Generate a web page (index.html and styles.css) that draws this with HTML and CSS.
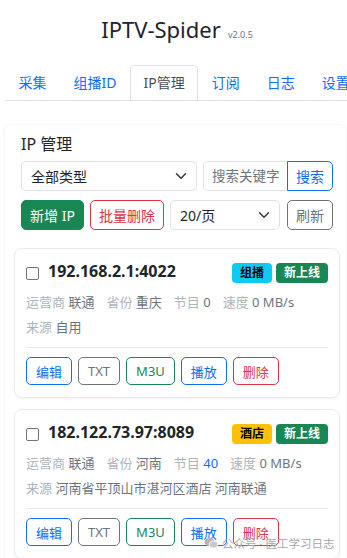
FILE: index.html
```html
<!DOCTYPE html>
<html lang="zh-CN">
<head>
  <meta charset="UTF-8">
  <title>IPTV-Spider</title>
  <meta name="viewport" content="width=device-width, initial-scale=1.0">
  <link rel="stylesheet" href="styles.css">
</head>
<body>

  <!-- Header -->
  <div class="header">
    <span class="title">IPTV-Spider</span>
    <span class="version">v2.0.5</span>
  </div>

  <!-- Tabs -->
  <div class="tabs">
    <a class="tab">采集</a>
    <a class="tab">组播ID</a>
    <a class="tab active">IP管理</a>
    <a class="tab">订阅</a>
    <a class="tab">日志</a>
    <a class="tab">设置</a>
  </div>

  <!-- IP 管理 -->
  <div class="panel">
    <h2 class="panel-title">IP 管理</h2>

    <div class="toolbar">
      <div class="select type-select">
        <span>全部类型</span>
        <svg width="12" height="12" viewBox="0 0 16 16"><path d="M2 5l6 6 6-6" fill="none" stroke="#343a40" stroke-width="2" stroke-linecap="round" stroke-linejoin="round"/></svg>
      </div>
      <div class="search-group">
        <div class="search-input">搜索关键字</div>
        <button class="btn btn-outline-primary search-btn">搜索</button>
      </div>
    </div>

    <div class="toolbar">
      <button class="btn btn-success add-btn">新增 IP</button>
      <button class="btn btn-outline-danger batch-btn">批量删除</button>
      <div class="select page-select">
        <span>20/页</span>
        <svg width="12" height="12" viewBox="0 0 16 16"><path d="M2 5l6 6 6-6" fill="none" stroke="#343a40" stroke-width="2" stroke-linecap="round" stroke-linejoin="round"/></svg>
      </div>
      <button class="btn btn-outline-secondary refresh-btn">刷新</button>
    </div>

    <div class="ip-list">
      <div class="ip-card">
        <div class="ip-head">
          <span class="check"></span>
          <span class="ip">192.168.2.1:4022</span>
          <span class="badges">
            <span class="badge badge-info">组播</span>
            <span class="badge badge-success">新上线</span>
          </span>
        </div>
        <div class="info info-first">
          <span><span class="label">运营商</span> 联通</span>
          <span><span class="label">省份</span> 重庆</span>
          <span><span class="label">节目</span> 0</span>
          <span><span class="label">速度</span> 0 MB/s</span>
        </div>
        <div class="info">
          <span><span class="label">来源</span> 自用</span>
        </div>
        <div class="actions">
          <button class="btn btn-sm btn-outline-primary">编辑</button>
          <button class="btn btn-sm btn-outline-secondary">TXT</button>
          <button class="btn btn-sm btn-outline-success">M3U</button>
          <button class="btn btn-sm btn-outline-primary">播放</button>
          <button class="btn btn-sm btn-outline-danger">删除</button>
        </div>
      </div>

      <div class="ip-card">
        <div class="ip-head">
          <span class="check"></span>
          <span class="ip">182.122.73.97:8089</span>
          <span class="badges">
            <span class="badge badge-warning">酒店</span>
            <span class="badge badge-success">新上线</span>
          </span>
        </div>
        <div class="info info-first">
          <span><span class="label">运营商</span> 联通</span>
          <span><span class="label">省份</span> 河南</span>
          <span><span class="label">节目</span> <span class="count">40</span></span>
          <span><span class="label">速度</span> 0 MB/s</span>
        </div>
        <div class="info">
          <span><span class="label">来源</span> 河南省平顶山市湛河区酒店 河南联通</span>
        </div>
        <div class="actions">
          <button class="btn btn-sm btn-outline-primary">编辑</button>
          <button class="btn btn-sm btn-outline-secondary">TXT</button>
          <button class="btn btn-sm btn-outline-success">M3U</button>
          <button class="btn btn-sm btn-outline-primary">播放</button>
          <button class="btn btn-sm btn-outline-danger">删除</button>
        </div>
      </div>
    </div>
  </div>

  <!-- watermark -->
  <div class="watermark">
    <svg width="14" height="12" viewBox="0 0 28 24"><ellipse cx="11" cy="10" rx="10" ry="8.5" fill="#b5b5b5"/><ellipse cx="19" cy="15" rx="8.5" ry="7" fill="#c8c8c8" stroke="#fff" stroke-width="1.5"/></svg>
    <span>公众号 · 医工学习日志</span>
  </div>

</body>
</html>
```

FILE: styles.css
```css
body {
  margin: 0;
  padding: 0;
  width: 347px;
  height: 558px;
  overflow: hidden;
  background-color: #fff;
  font-family: "Noto Sans", "Noto Sans CJK SC", sans-serif;
  color: #212529;
  position: relative;
}

.header {
  height: 65px;
  box-sizing: border-box;
  padding: 14px 0 0 7px;
  text-align: center;
  white-space: nowrap;
}

.title {
  font-size: 22px;
  line-height: 30px;
}

.version {
  font-size: 9px;
  color: #6c757d;
  margin-left: 3px;
}

.tabs {
  display: flex;
  margin-left: 5px;
  width: 342px;
  overflow: hidden;
  border-bottom: 1px solid #dee2e6;
  white-space: nowrap;
}

.tab {
  flex-shrink: 0;
  padding: 7px 12.5px;
  font-size: 14px;
  line-height: 20px;
  color: #0d6efd;
  border: 1px solid transparent;
  border-top-left-radius: 5px;
  border-top-right-radius: 5px;
  margin-bottom: -1px;
}

.tab.active {
  color: #495057;
  background-color: #fff;
  border-color: #dee2e6 #dee2e6 #fff;
}

.panel {
  margin: 24px 0 0 5px;
  width: 341px;
  padding-top: 8px;
  background-color: #fff;
  border-radius: 6px;
  box-shadow: 0 0 3px rgba(0,0,0,0.08);
  min-height: 500px;
}

.panel-title {
  margin: 0 0 6px 16px;
  font-size: 16px;
  font-weight: normal;
  line-height: 22px;
}

.toolbar {
  display: flex;
  gap: 6px;
  margin: 0 13px 9px 16px;
  height: 30px;
}

.select {
  display: flex;
  align-items: center;
  justify-content: space-between;
  box-sizing: border-box;
  border: 1px solid #dee2e6;
  border-radius: 5px;
  padding: 0 9px 0 9px;
  font-size: 14px;
}

.type-select {
  width: 176px;
}

.page-select {
  width: 110px;
  margin-right: 1px;
}

.search-group {
  display: flex;
  width: 130px;
}

.search-input {
  box-sizing: border-box;
  width: 84px;
  border: 1px solid #dee2e6;
  border-right: none;
  border-radius: 5px 0 0 5px;
  font-size: 13.5px;
  color: #6c757d;
  line-height: 28px;
  padding-left: 8px;
  white-space: nowrap;
  overflow: hidden;
}

.btn {
  box-sizing: border-box;
  font-family: inherit;
  font-size: 13px;
  background-color: #fff;
  border: 1px solid;
  border-radius: 5px;
  padding: 0 6px;
  cursor: pointer;
  white-space: nowrap;
}

.toolbar .btn {
  font-size: 14px;
  padding: 0 4px;
}

.search-btn {
  width: 46px;
  border-radius: 0 5px 5px 0;
}

.add-btn {
  width: 63px;
}

.batch-btn {
  width: 74px;
}

.refresh-btn {
  width: 46px;
}

.btn-success {
  background-color: #198754;
  border-color: #198754;
  color: #fff;
}

.btn-outline-primary {
  color: #0d6efd;
  border-color: #0d6efd;
}

.btn-outline-secondary {
  color: #6c757d;
  border-color: #6c757d;
}

.btn-outline-success {
  color: #198754;
  border-color: #198754;
}

.btn-outline-danger {
  color: #dc3545;
  border-color: #dc3545;
}

.ip-list {
  margin: 18px 6px 0 9px;
}

.ip-card {
  border: 1px solid #e9ecef;
  border-radius: 8px;
  box-shadow: 0 1px 3px rgba(0,0,0,0.06);
  padding: 13px 11px 12px 11px;
  margin-bottom: 11px;
}

.ip-head {
  display: flex;
  align-items: center;
  height: 22px;
}

.check {
  width: 11px;
  height: 11px;
  border: 1px solid #6c757d;
  border-radius: 2px;
  margin-right: 9px;
}

.ip {
  font-size: 16px;
  font-weight: bold;
  margin-top: -4px;
}

.badges {
  margin-left: auto;
  display: flex;
  gap: 4px;
}

.badge {
  font-size: 12px;
  font-weight: bold;
  line-height: 20px;
  padding: 0 8px;
  border-radius: 4px;
}

.badge-info {
  background-color: #0dcaf0;
  color: #000;
}

.badge-warning {
  background-color: #ffc107;
  color: #000;
}

.badge-success {
  background-color: #198754;
  color: #fff;
}

.info {
  display: flex;
  gap: 12px;
  font-size: 13px;
  line-height: 25px;
  color: #6c757d;
  white-space: nowrap;
}

.info-first {
  margin-top: 6px;
}

.label {
  color: #adb5bd;
}

.count {
  color: #0d6efd;
}

.actions {
  display: flex;
  gap: 6px;
  border-top: 1px solid #e9ecef;
  margin-top: 7px;
  padding-top: 9px;
}

.btn-sm {
  height: 28px;
  padding: 0 9px;
}

.watermark {
  position: absolute;
  left: 204px;
  top: 535px;
  display: flex;
  align-items: center;
  gap: 4px;
  font-size: 11.5px;
  color: #a8a8a8;
}
```
